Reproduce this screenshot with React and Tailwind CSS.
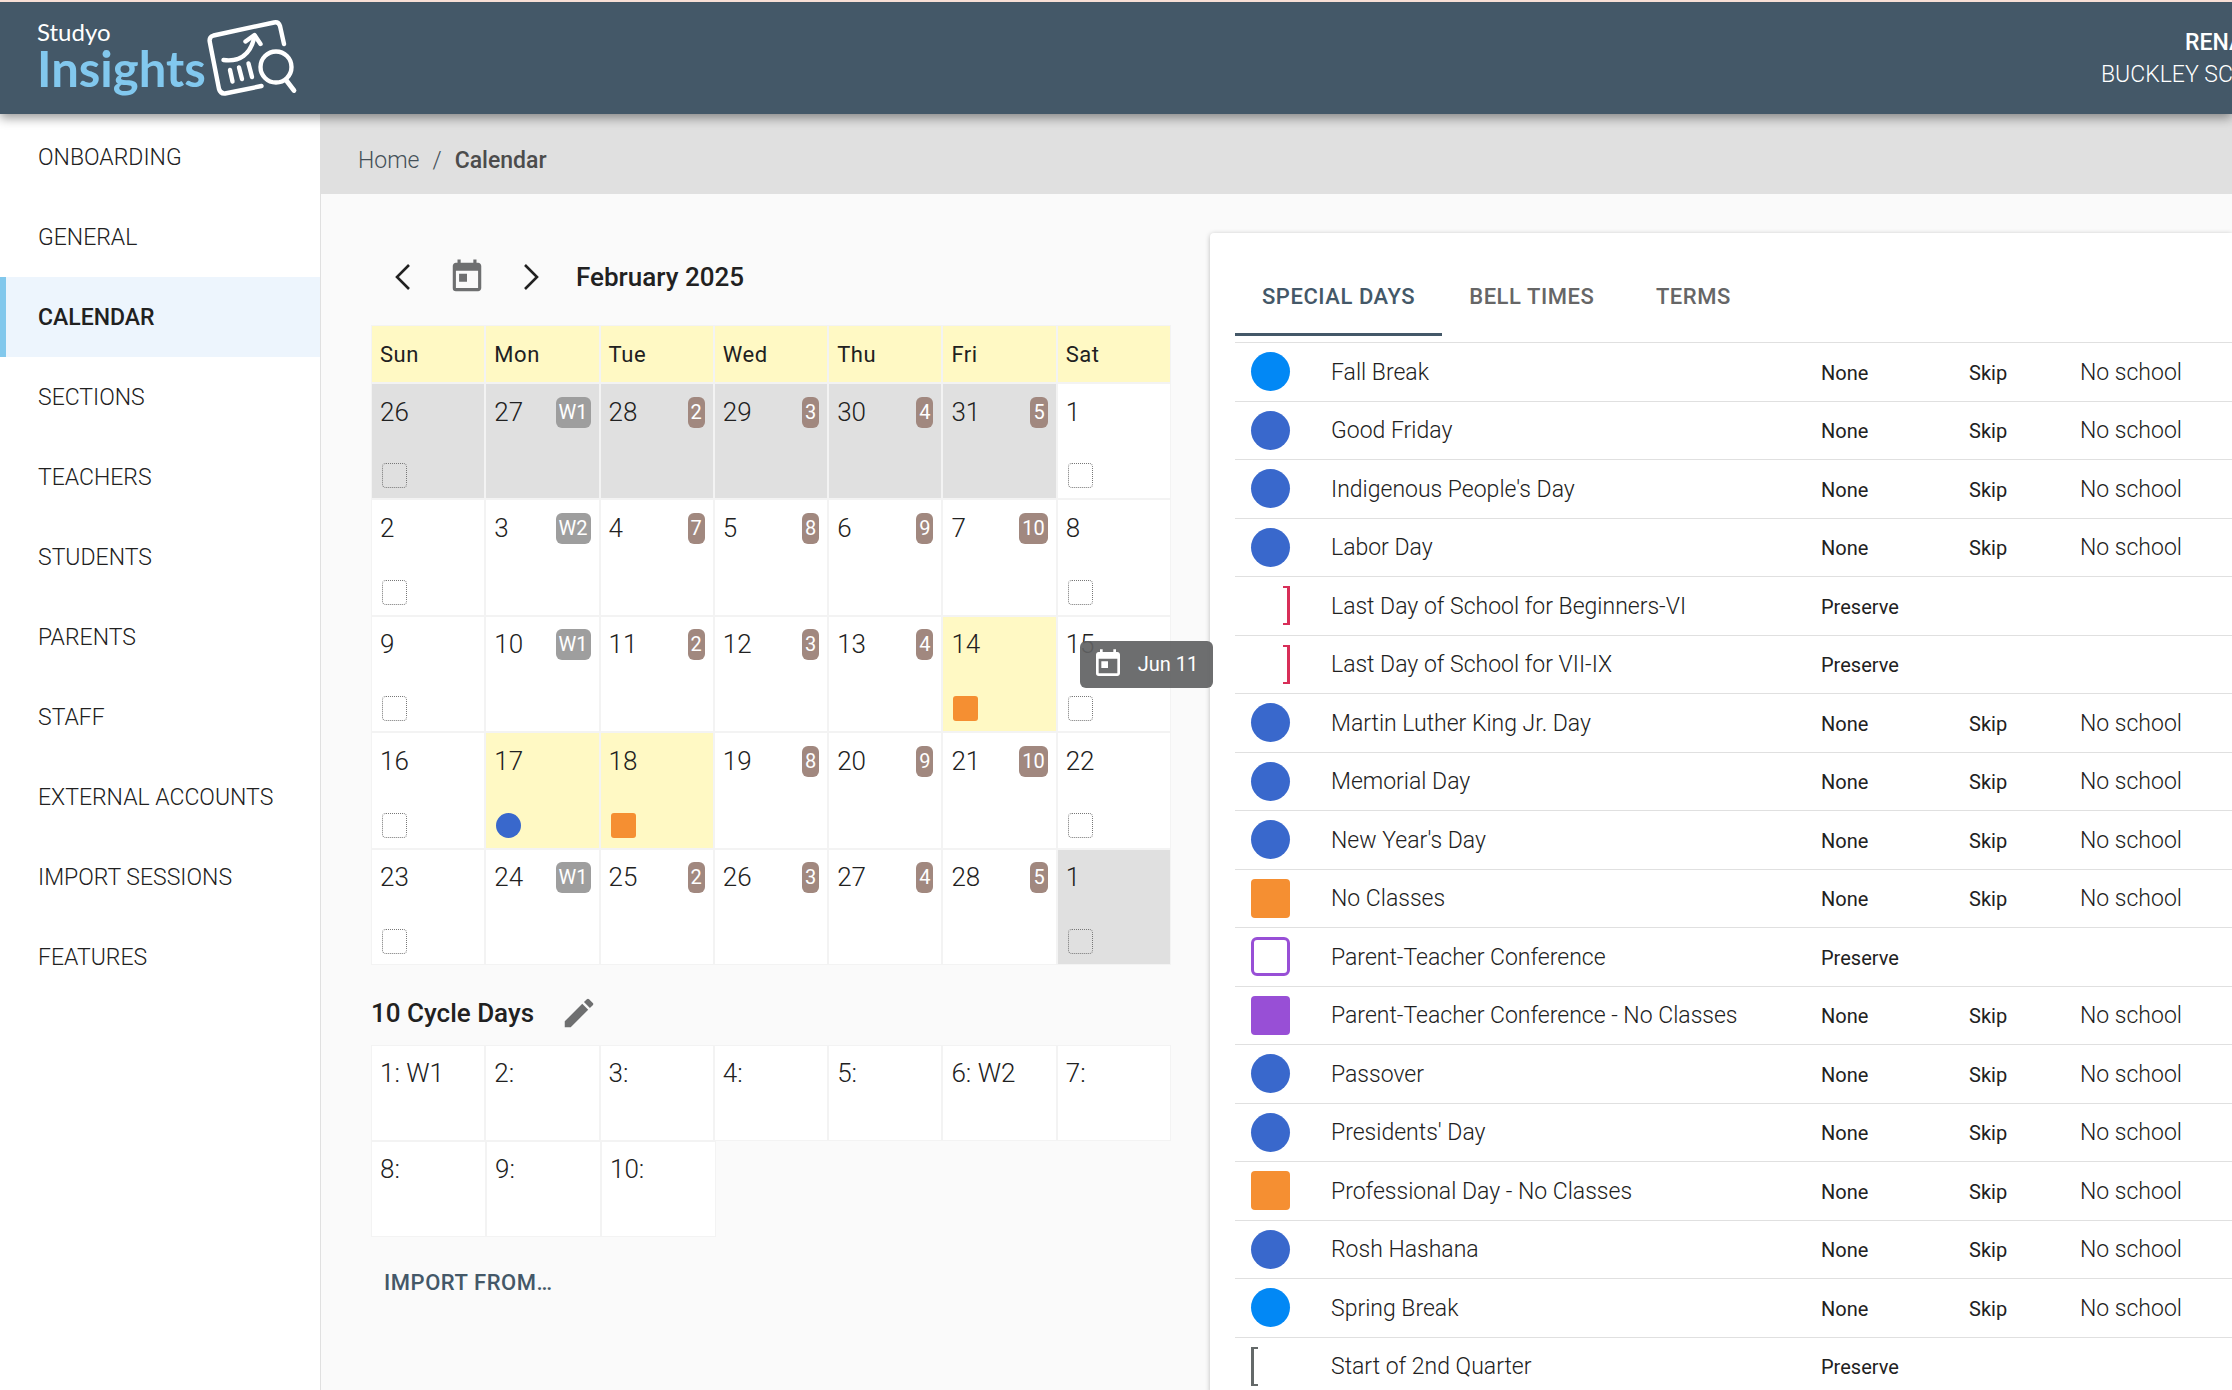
import { MdEdit, MdToday } from "react-icons/md";

const navigation = [
  "Onboarding",
  "General",
  "Calendar",
  "Sections",
  "Teachers",
  "Students",
  "Parents",
  "Staff",
  "External Accounts",
  "Import Sessions",
  "Features",
];

const weekDays = ["Sun", "Mon", "Tue", "Wed", "Thu", "Fri", "Sat"];

const weeks = [
  [
    { day: 26, outside: true, empty: true },
    { day: 27, outside: true, cycle: "W1" },
    { day: 28, outside: true, cycle: "2" },
    { day: 29, outside: true, cycle: "3" },
    { day: 30, outside: true, cycle: "4" },
    { day: 31, outside: true, cycle: "5" },
    { day: 1, empty: true },
  ],
  [
    { day: 2, empty: true },
    { day: 3, cycle: "W2" },
    { day: 4, cycle: "7" },
    { day: 5, cycle: "8" },
    { day: 6, cycle: "9" },
    { day: 7, cycle: "10" },
    { day: 8, empty: true },
  ],
  [
    { day: 9, empty: true },
    { day: 10, cycle: "W1" },
    { day: 11, cycle: "2" },
    { day: 12, cycle: "3" },
    { day: 13, cycle: "4" },
    { day: 14, special: "orange" },
    { day: 15, empty: true, tooltip: "Jun 11" },
  ],
  [
    { day: 16, empty: true },
    { day: 17, special: "blue" },
    { day: 18, special: "orange" },
    { day: 19, cycle: "8" },
    { day: 20, cycle: "9" },
    { day: 21, cycle: "10" },
    { day: 22, empty: true },
  ],
  [
    { day: 23, empty: true },
    { day: 24, cycle: "W1" },
    { day: 25, cycle: "2" },
    { day: 26, cycle: "3" },
    { day: 27, cycle: "4" },
    { day: 28, cycle: "5" },
    { day: 1, outside: true, empty: true },
  ],
];

const tabs = ["Special Days", "Bell Times", "Terms"];

const specialDays = [
  { name: "Fall Break", symbol: "sky" },
  { name: "Good Friday", symbol: "blue" },
  { name: "Indigenous People's Day", symbol: "blue" },
  { name: "Labor Day", symbol: "blue" },
  { name: "Last Day of School for Beginners-VI", symbol: "end", preserve: true },
  { name: "Last Day of School for VII-IX", symbol: "end", preserve: true },
  { name: "Martin Luther King Jr. Day", symbol: "blue" },
  { name: "Memorial Day", symbol: "blue" },
  { name: "New Year's Day", symbol: "blue" },
  { name: "No Classes", symbol: "orange" },
  { name: "Parent-Teacher Conference", symbol: "outline", preserve: true },
  { name: "Parent-Teacher Conference - No Classes", symbol: "purple" },
  { name: "Passover", symbol: "blue" },
  { name: "Presidents' Day", symbol: "blue" },
  { name: "Professional Day - No Classes", symbol: "orange" },
  { name: "Rosh Hashana", symbol: "blue" },
  { name: "Spring Break", symbol: "sky" },
  { name: "Start of 2nd Quarter", symbol: "start", preserve: true },
];

const symbols = {
  sky: "w-[39px] rounded-full bg-[#0288f5]",
  blue: "w-[39px] rounded-full bg-[#3968cc]",
  orange: "w-[39px] rounded bg-[#f58f32]",
  purple: "w-[39px] rounded bg-[#984fd6]",
  outline: "w-[39px] rounded-md border-3 border-[#984fd6]",
  end: "ml-8 w-[7px] border-2 border-l-0 border-r-3 border-[#d82e58]",
  start: "w-[7px] border-2 border-r-0 border-l-3 border-[#646969]",
};

const markers = {
  blue: "rounded-full bg-[#3968cc]",
  orange: "rounded-[3px] bg-[#f58f32]",
};

function Logo() {
  return (
    <a href="#" className="flex items-start" aria-label="Studyo Insights">
      <div className="flex flex-col pt-1 font-[Lato,sans-serif]">
        <span className="text-2xl leading-7 text-white">Studyo</span>
        <span className="text-[49px] leading-11 font-bold text-[#82c8ee]">Insights</span>
      </div>
      <svg
        width="92"
        height="84"
        viewBox="206 14 92 84"
        fill="none"
        stroke="white"
        strokeWidth="4.4"
        strokeLinecap="round"
        strokeLinejoin="round"
      >
        <path d="M284 44 L280 26 Q278.5 21.5 274 22.5 L213.500 35.500 Q209 37 209.700 41.500 L219 89 Q220.500 94 225 93.500 L261.500 86" />
        <circle cx="276" cy="67" r="15.500" />
        <path d="M286 80 L294 90.500" strokeWidth="4.800" />
        <path d="M223.500 60 C239 62 251 55 254.500 36" />
        <path d="M245.500 41.500 L254.500 35 L260.500 44" />
        <path d="M230 70 L232.500 81.500 M239 67.500 L242 79 M248.500 63.500 L252 77" />
      </svg>
    </a>
  );
}

function Header() {
  return (
    <header className="z-20 flex h-[114px] shrink-0 items-start justify-between border-t-2 border-[#f8dfd6] bg-[#445868] pt-3 pl-[37px] shadow-[0_4px_10px_rgba(0,0,0,0.4)]">
      <Logo />
      <div className="w-[131px] pt-[13px] text-[23px] leading-8 whitespace-nowrap text-white">
        <p className="pl-[84px] font-medium">RENA</p>
        <p className="font-light">BUCKLEY SC</p>
      </div>
    </header>
  );
}

function Sidebar() {
  return (
    <nav className="w-[321px] shrink-0 border-r border-[#e0e0e0] bg-white pt-[3px]">
      <ul>
        {navigation.map((item) => (
          <li key={item}>
            <a
              href="#"
              className={`flex h-20 items-center border-l-6 pt-[2px] pl-8 text-[23px] uppercase ${
                item === "Calendar"
                  ? "border-[#82c8ec] bg-[#edf5fd] font-medium"
                  : "border-transparent font-light"
              }`}
            >
              {item}
            </a>
          </li>
        ))}
      </ul>
    </nav>
  );
}

function Chevron({ d }) {
  return (
    <svg width="24" height="30" viewBox="0 0 24 30" fill="none" stroke="currentColor" strokeWidth="2.600">
      <path d={d} />
    </svg>
  );
}

function MonthBar() {
  return (
    <div className="flex h-16 items-center">
      <button aria-label="Previous month" className="ml-[21px]">
        <Chevron d="M17 3 L5 15 L17 27" />
      </button>
      <button aria-label="Today" className="ml-8 text-[#6e6f70]">
        <MdToday size={38} />
      </button>
      <button aria-label="Next month" className="ml-[34px]">
        <Chevron d="M5 3 L17 15 L5 27" />
      </button>
      <h2 className="ml-8 text-[26px] font-medium">February 2025</h2>
    </div>
  );
}

function DayCell({ date }) {
  const background = date.outside ? "bg-[#e0e0e0]" : date.special ? "bg-[#fff9c4]" : "bg-white";

  return (
    <td className={`relative border border-[#f3f3f3] ${background}`}>
      <div className="flex h-full flex-col justify-between px-2 pt-3 pb-[10px]">
        <div className="flex h-8 items-center justify-between">
          <span className="text-[26px] font-light">{date.day}</span>
          {date.cycle && (
            <span
              className={`rounded-md px-[3px] text-[20px] leading-[31px] text-white ${
                date.cycle.startsWith("W") ? "bg-[#9e9e9e]" : "bg-[#a1887f]"
              }`}
            >
              {date.cycle}
            </span>
          )}
        </div>
        {date.empty && (
          <button
            aria-label="Add special day"
            className="ml-[2px] size-[25px] rounded border border-dotted border-[#777]"
          />
        )}
        {date.special && <span className={`ml-[2px] size-[25px] ${markers[date.special]}`} />}
      </div>
      {date.tooltip && (
        <div
          role="tooltip"
          className="absolute top-6 left-[22px] z-10 flex h-[47px] w-[133px] items-center gap-[14px] rounded-md bg-[#616263]/92 pl-3 text-[20px] whitespace-nowrap text-white"
        >
          <MdToday size={32} />
          {date.tooltip}
        </div>
      )}
    </td>
  );
}

function MonthTable() {
  return (
    <table className="h-[640px] w-full table-fixed border-separate border-spacing-0">
      <thead>
        <tr className="h-[58px]">
          {weekDays.map((name) => (
            <th
              key={name}
              scope="col"
              className="border border-[#f3f3f3] bg-[#fff9c4] px-2 text-left text-[22px] font-normal tracking-wide"
            >
              {name}
            </th>
          ))}
        </tr>
      </thead>
      <tbody>
        {weeks.map((week, index) => (
          <tr key={index} className="h-[116px]">
            {week.map((date) => (
              <DayCell key={date.day} date={date} />
            ))}
          </tr>
        ))}
      </tbody>
    </table>
  );
}

function CycleDays() {
  const cell = "h-24 border border-[#f3f3f3] bg-white px-2 pt-2 text-[26px] leading-[38px] font-light";

  return (
    <section>
      <div className="flex h-20 items-center pt-4">
        <h2 className="text-[26px] font-medium">10 Cycle Days</h2>
        <button aria-label="Edit cycle days" className="ml-[26px] text-[#6e6f70]">
          <MdEdit size={38} />
        </button>
      </div>
      <ol className="grid grid-cols-7">
        {["1: W1", "2:", "3:", "4:", "5:", "6: W2", "7:"].map((label) => (
          <li key={label} className={cell}>
            {label}
          </li>
        ))}
      </ol>
      <ol className="flex">
        {["8:", "9:", "10:"].map((label) => (
          <li key={label} className={`w-[115px] ${cell}`}>
            {label}
          </li>
        ))}
      </ol>
    </section>
  );
}

function SpecialDaysPanel() {
  return (
    <section className="min-w-0 flex-1 rounded-l bg-white pt-[19px] pl-[25px] shadow-[0_1px_5px_rgba(0,0,0,0.25)]">
      <div role="tablist" className="flex">
        {tabs.map((tab, index) => (
          <button
            key={tab}
            role="tab"
            aria-selected={index === 0}
            className={`h-[84px] min-w-36 border-b-3 px-[27px] pt-2 text-[22px] font-medium tracking-wide uppercase ${
              index === 0 ? "border-[#445868] text-[#445868]" : "border-transparent text-[#666]"
            }`}
          >
            {tab}
          </button>
        ))}
      </div>
      <table className="mt-[6px] h-[1053px] w-full table-fixed border-separate border-spacing-0 text-left">
        <colgroup>
          <col className="w-24" />
          <col className="w-[490px]" />
          <col className="w-[148px]" />
          <col className="w-[111px]" />
          <col />
        </colgroup>
        <tbody>
          {specialDays.map(({ name, symbol, preserve }) => (
            <tr key={name} className="h-[58px] text-[20px] *:border-t *:border-[#e0e0e0]">
              <td className="pl-4">
                <div className={`h-[39px] ${symbols[symbol]}`} />
              </td>
              <td className="pt-[2px] text-[23px] font-light">{name}</td>
              <td className="pt-[2px]">{preserve ? "Preserve" : "None"}</td>
              <td className="pt-[2px]">{preserve ? "" : "Skip"}</td>
              <td className="pt-[2px] text-[23px] font-light">{preserve ? "" : "No school"}</td>
            </tr>
          ))}
        </tbody>
      </table>
    </section>
  );
}

export default function App() {
  return (
    <div className="flex h-screen flex-col overflow-hidden bg-[#fafafa] font-[Roboto,sans-serif] text-[#212121]">
      <Header />
      <div className="flex min-h-0 flex-1">
        <Sidebar />
        <main className="min-w-0 flex-1">
          <nav className="flex h-20 items-center gap-[13px] bg-[#e0e0e0] pt-[14px] pl-[37px] text-[23px] text-[#445058]">
            <a href="#" className="font-light">
              Home
            </a>
            <span className="font-light">/</span>
            <span className="font-medium text-[#4c4c4c]">Calendar</span>
          </nav>
          <div className="flex items-start gap-[39px] pt-[39px] pl-[50px]">
            <div className="w-[800px] shrink-0 pt-3">
              <MonthBar />
              <div className="pt-4">
                <MonthTable />
              </div>
              <CycleDays />
              <button className="mt-[25px] px-[13px] py-1 text-[22px] font-medium tracking-wide text-[#445868] uppercase">
                Import from…
              </button>
            </div>
            <SpecialDaysPanel />
          </div>
        </main>
      </div>
    </div>
  );
}
